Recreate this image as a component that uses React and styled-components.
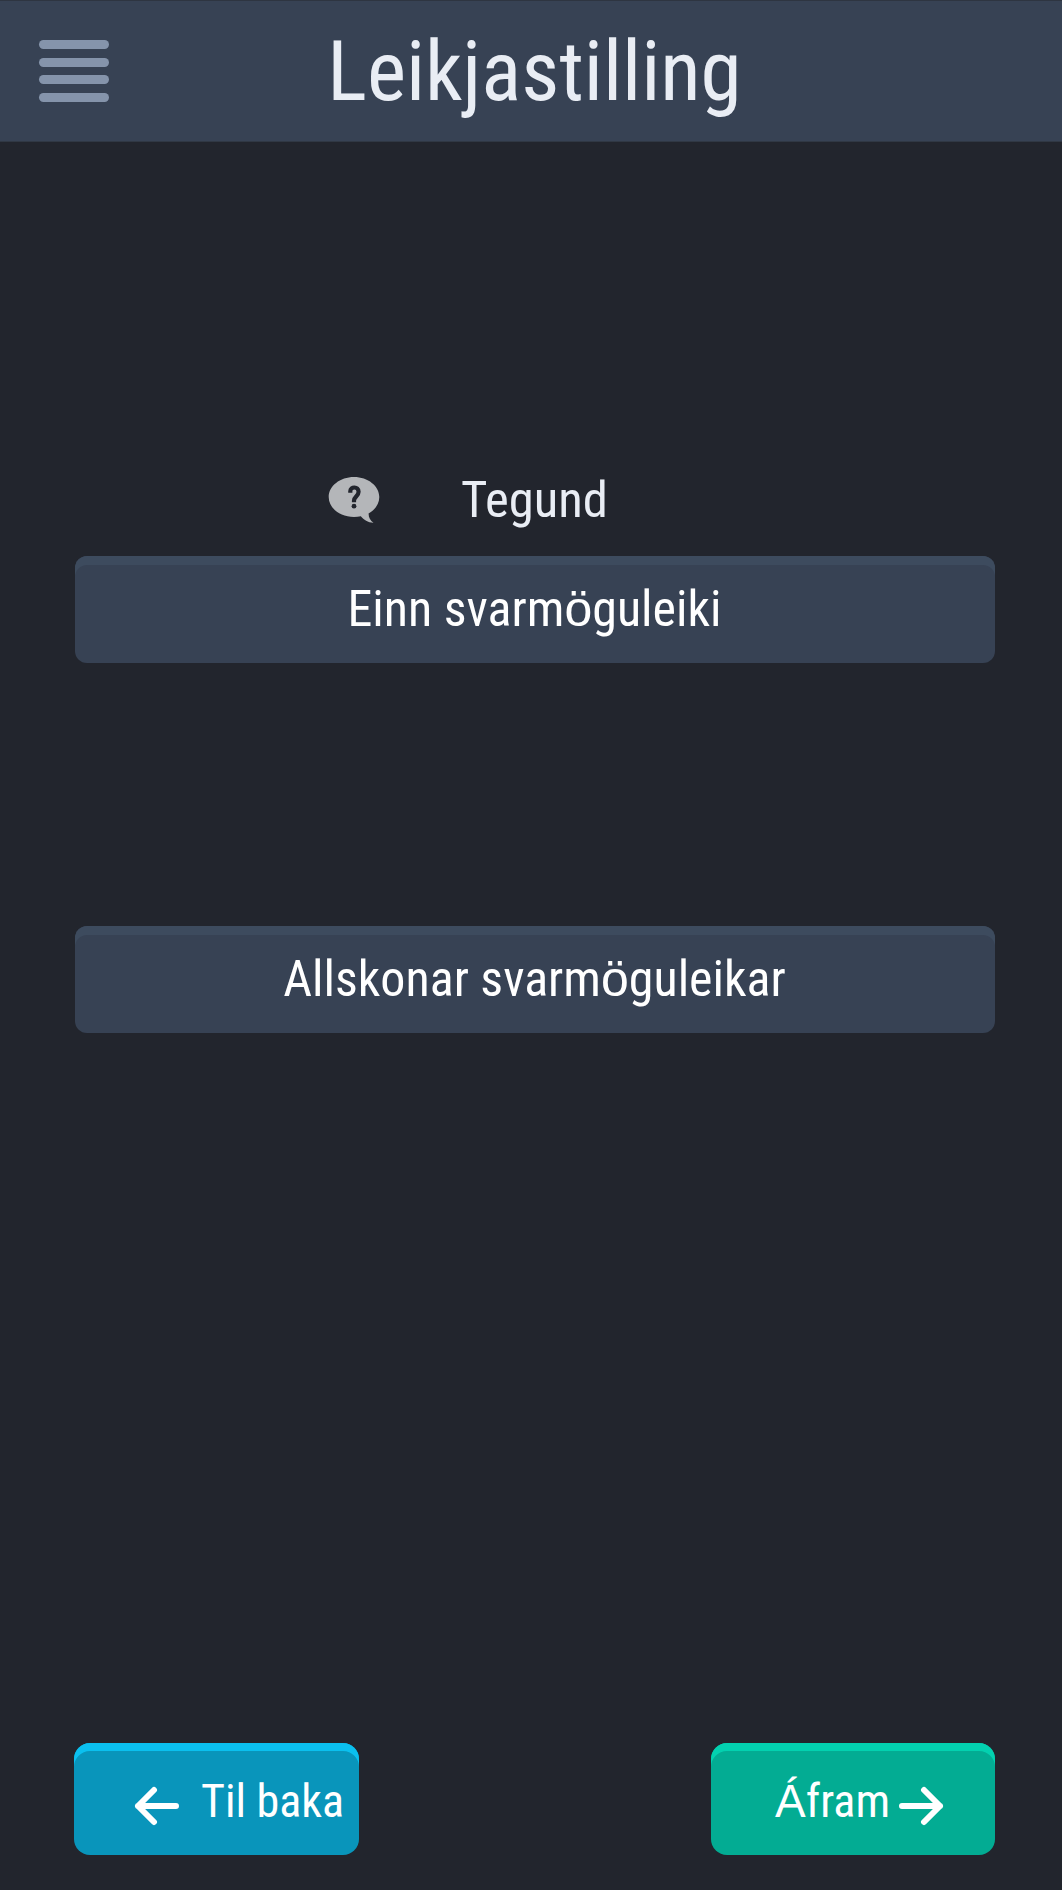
import React from "react";
import styled, { createGlobalStyle } from "styled-components";

const GlobalStyle = createGlobalStyle`
  * { box-sizing: border-box; }
  body { margin: 0; background: #22252d; }
  button { border: 0; padding: 0; margin: 0; background: none; font: inherit; color: inherit; }
`;

const Screen = styled.div`
  width: 1062px;
  height: 1890px;
  display: flex;
  flex-direction: column;
  background: #22252d;
  font-family: "Roboto Condensed", Roboto, sans-serif;
  font-stretch: 75%;
  color: #fff;
`;

const Header = styled.header`
  height: 142px;
  flex: none;
  display: grid;
  grid-template-columns: 1fr auto 1fr;
  align-items: center;
  padding: 0 32px 0 39px;
  background: #374254;
  border-top: 1px solid #2e3541;
  border-bottom: 1px solid #303844;
`;

const MenuButton = styled.button`
  width: 70px;
  display: flex;
  flex-direction: column;
  gap: 8.5px;
`;

const MenuBar = styled.span`
  height: 9px;
  border-radius: 5px;
  background: #8594ab;
`;

const Label = styled.span`
  display: block;
  white-space: pre;
  line-height: 60px;
  font-size: ${(p) => p.$size}px;
`;

const Title = styled.h1`
  margin: 2px 0 0;
  font-size: 83.3px;
  font-weight: 400;
  line-height: 100px;
  color: #e9edf4;
`;

/* Accented letters are set in the wider sans face. */
const Accented = styled.span`
  font-family: "Liberation Sans", Arial, sans-serif;
  font-stretch: 100%;
  line-height: 1;
`;

const Main = styled.main`
  flex: 1;
  display: flex;
  flex-direction: column;
  padding: 328px 67px 35px 75px;
`;

const Caption = styled.div`
  height: 60px;
  display: flex;
  align-items: center;
  gap: 81px;
  padding-left: 253px;
  color: #e9edf4;
`;

const Choice = styled.button`
  height: 107px;
  flex: none;
  margin-top: ${(p) => p.$gap}px;
  padding: 0 1px 2px 0;
  display: flex;
  align-items: center;
  justify-content: center;
  border-radius: 12px;
  background: #374254;
  box-shadow: inset 0 9px 0 #3d4b5e;
`;

const Footer = styled.footer`
  margin-top: auto;
  margin-left: -1px;
  display: flex;
  justify-content: space-between;
`;

const NavButton = styled.button`
  width: 284.5px;
  height: 112px;
  display: flex;
  align-items: center;
  gap: ${(p) => p.$gap}px;
  padding: 4px 0 0 ${(p) => p.$inset}px;
  border-radius: 16px;
  background: ${(p) => p.$fill};
  box-shadow: inset 0 8px 0 ${(p) => p.$edge};
`;

const Arrow = styled.svg`
  flex: none;
  width: 46px;
  height: 40px;
  margin-top: 9px;
  fill: none;
  stroke: #fff;
  stroke-width: 6;
  stroke-linecap: round;
  stroke-linejoin: round;
`;

function HelpIcon() {
  return (
    <svg width="52" height="48" viewBox="0 0 52 48">
      <path
        fill="#b4b6b9"
        d="M26 1C12 1 .7 10 .7 21S12 41 26 41c2.500 0 4.700-.2 6.800-.7 3 3.500 7 6.300 12.700 6.500-3.300-2.600-5-5.300-4.900-9.400C47 34 51.300 28 51.300 21 51.300 10 40 1 26 1Z"
      />
      <path fill="none" stroke="#22252d" strokeWidth="4.200" d="M22.300 16.800v-1.600c0-5 8.300-5 8.300.6 0 4.400-4.600 5-4.600 8.800v1.600" />
      <circle cx="26" cy="30.200" r="2.400" fill="#22252d" />
    </svg>
  );
}

export default function App() {
  return (
    <Screen>
      <GlobalStyle />
      <Header>
        <MenuButton aria-label="Valmynd">
          <MenuBar /><MenuBar /><MenuBar /><MenuBar />
        </MenuButton>
        <Title>Leikjastilling</Title>
      </Header>
      <Main>
        <Caption>
          <HelpIcon />
          <Label $size={50.7}>Tegund</Label>
        </Caption>
        <Choice $gap={26}><Label $size={50}>Einn svarm<Accented>ö</Accented>guleiki</Label></Choice>
        <Choice $gap={263}><Label $size={50}>Allskonar svarm<Accented>ö</Accented>guleikar</Label></Choice>
        <Footer>
          <NavButton $fill="#0995bb" $edge="#0bc0ef" $inset={59.5} $gap={21.5}>
            <Arrow viewBox="0 0 46 40"><path d="M42 20H4M20 4 4 20l16 16" /></Arrow>
            <Label $size={46}>Til baka</Label>
          </NavButton>
          <NavButton $fill="#03ac93" $edge="#03d1b0" $inset={64.5} $gap={8}>
            <Label $size={46}><Accented>Á</Accented>fram</Label>
            <Arrow viewBox="0 0 46 40"><path d="M4 20h38M26 4l16 16-16 16" /></Arrow>
          </NavButton>
        </Footer>
      </Main>
    </Screen>
  );
}
